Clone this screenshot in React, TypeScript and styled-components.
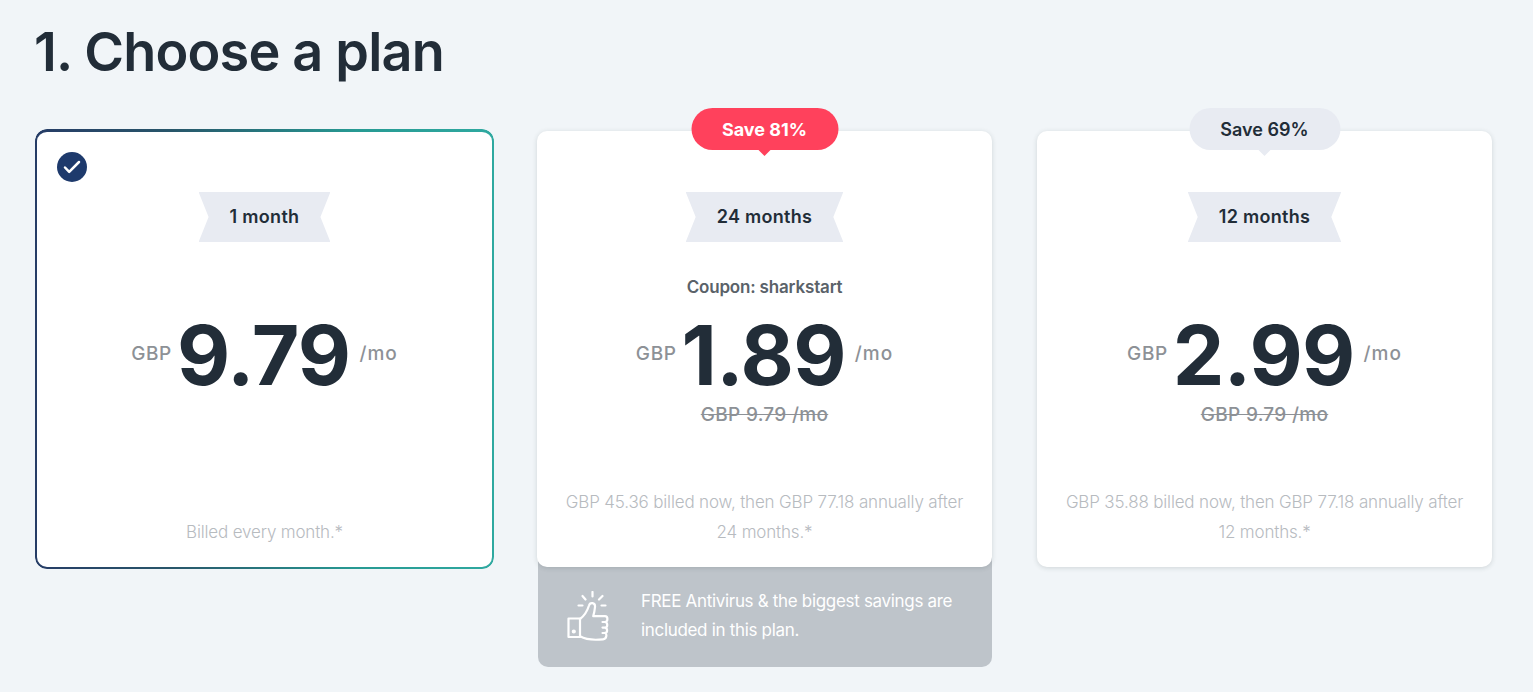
import styled, { createGlobalStyle, css } from 'styled-components'

type Plan = {
  period: string
  price: string
  billing: string
  save?: string
  highlighted?: boolean
  selected?: boolean
  coupon?: string
  oldPrice?: string
  perk?: string
}

const plans: Plan[] = [
  {
    period: '1 month',
    price: '9.79',
    billing: 'Billed every month.*',
    selected: true
  },
  {
    period: '24 months',
    price: '1.89',
    billing: 'GBP 45.36 billed now, then GBP 77.18 annually after 24 months.*',
    save: 'Save 81%',
    highlighted: true,
    coupon: 'Coupon: sharkstart',
    oldPrice: 'GBP 9.79 /mo',
    perk: 'FREE Antivirus & the biggest savings are included in this plan.'
  },
  {
    period: '12 months',
    price: '2.99',
    billing: 'GBP 35.88 billed now, then GBP 77.18 annually after 12 months.*',
    save: 'Save 69%',
    oldPrice: 'GBP 9.79 /mo'
  }
]

const ThumbIcon = () => (
  <ThumbSvg viewBox='0 0 42 50'>
    <path d='M1.5 27.5h11.5v18.5H1.5z' />
    <path d='M13 28c4-3 7-7 9-13.500c.8-3.500 6.500-3.500 6 1.500c-.3 3.500-1 6.500-1.800 9.200h11.800c3.200 0 3.200 5.300 0 5.800h-2.500M38 31c3 .6 3 5.200 0 5.600h-2.500M38 36.600c2.800.6 2.800 5 0 5.400h-2.500M38 42c2 .6 2 6-2 6.300c-8 .9-17 .4-23-3' />
    <path d='M25.500 1v4.500M15.500 5l3 3.500M35.500 5l-3.500 3.500M11.500 14.500h4M34.500 14.500h4' />
    <circle cx='6.800' cy='40.500' r='1' />
  </ThumbSvg>
)

const PlanColumn = ({ plan }: { plan: Plan }) => (
  <Column>
    <Card $selected={plan.selected}>
      {plan.selected && (
        <Check>
          <svg width='18' height='14' viewBox='0 0 18 14'>
            <path d='M2 7.500l4.200 4.300L16 2' />
          </svg>
        </Check>
      )}
      {plan.save && <Badge $highlighted={plan.highlighted}>{plan.save}</Badge>}
      <Ribbon>{plan.period}</Ribbon>
      <Coupon>{plan.coupon}</Coupon>
      <PriceRow>
        <Unit>GBP</Unit>
        <Price>{plan.price}</Price>
        <Unit $wide>/mo</Unit>
      </PriceRow>
      <OldPrice>{plan.oldPrice}</OldPrice>
      <Billing>{plan.billing}</Billing>
    </Card>
    {plan.perk && (
      <Perk>
        <ThumbIcon />
        <PerkText>{plan.perk}</PerkText>
      </Perk>
    )}
  </Column>
)

export default function App() {
  return (
    <>
      <GlobalStyle />
      <Page>
        <Title>1. Choose a plan</Title>
        <Plans>
          {plans.map((plan) => (
            <PlanColumn key={plan.period} plan={plan} />
          ))}
        </Plans>
      </Page>
    </>
  )
}

const GlobalStyle = createGlobalStyle`
  * {
    box-sizing: border-box;
  }

  body {
    margin: 0;
    background: #f1f5f8;
    font-family: Inter, 'Liberation Sans', sans-serif;
    color: #222d38;
  }
`

const Page = styled.main`
  width: 1533px;
  height: 692px;
  padding: 17px 0 0 37px;
  overflow: hidden;
`

const Title = styled.h1`
  margin: 0 0 44px -3px;
  font-size: 54px;
  line-height: 70px;
  font-weight: 600;
  letter-spacing: -0.8px;
  white-space: nowrap;
`

const Plans = styled.div`
  display: grid;
  grid-template-columns: repeat(3, 455px);
  column-gap: 45px;
  align-items: start;
`

const Column = styled.section`
  display: flex;
  flex-direction: column;
`

const Card = styled.div<{ $selected?: boolean }>`
  position: relative;
  z-index: 1;
  display: flex;
  flex-direction: column;
  align-items: center;
  height: 436px;
  padding: 61px 20px 20px;
  border-radius: 10px;
  background: #fff;
  box-shadow: 0 1px 5px rgba(30, 50, 50, 0.16);

  ${({ $selected }) =>
    $selected &&
    css`
      box-shadow: none;

      &::before {
        content: '';
        position: absolute;
        inset: -2px;
        padding: 3px 2px 2px;
        border-radius: 12px;
        background: linear-gradient(90deg, #263c66 0%, #28566a 30%, #279a93 70%, #2fa9a0 100%);
        mask: linear-gradient(#000 0 0) content-box exclude, linear-gradient(#000 0 0);
      }
    `}
`

const Check = styled.span`
  position: absolute;
  top: 21px;
  left: 20px;
  display: flex;
  align-items: center;
  justify-content: center;
  width: 30px;
  height: 30px;
  border-radius: 50%;
  background: #1e3a6c;

  path {
    fill: none;
    stroke: #fff;
    stroke-width: 2.5;
    stroke-linecap: round;
    stroke-linejoin: round;
  }
`

const Badge = styled.span<{ $highlighted?: boolean }>`
  position: absolute;
  top: -23px;
  left: 50%;
  width: ${({ $highlighted }) => ($highlighted ? 147 : 151)}px;
  height: 42px;
  border-radius: 21px;
  transform: translateX(-50%);
  background: ${({ $highlighted }) => ($highlighted ? '#ff415c' : '#e8ebf2')};
  color: ${({ $highlighted }) => ($highlighted ? '#fff' : '#222d38')};
  font-size: 18px;
  font-weight: ${({ $highlighted }) => ($highlighted ? 700 : 600)};
  line-height: 43px;
  text-align: center;

  &::after {
    content: '';
    position: absolute;
    top: 100%;
    left: 50%;
    margin-left: -6px;
    border: 6px solid transparent;
    border-bottom: 0;
    border-top-color: ${({ $highlighted }) => ($highlighted ? '#ff415c' : '#e8ebf2')};
  }
`

const Ribbon = styled.div`
  height: 50px;
  padding: 0 31px;
  background: #e8ebf2;
  clip-path: polygon(0 0, 100% 0, calc(100% - 10px) 50%, 100% 100%, 0 100%, 10px 50%);
  font-size: 18px;
  font-weight: 600;
  line-height: 49px;
  letter-spacing: 0.3px;
`

const Coupon = styled.div`
  height: 30px;
  margin-top: 30px;
  color: #5a6269;
  font-size: 17px;
  font-weight: 600;
  line-height: 30px;
  letter-spacing: -0.17px;
`

const PriceRow = styled.div`
  display: flex;
  height: 87px;
  margin-top: 10px;
`

const Unit = styled.span<{ $wide?: boolean }>`
  color: #8d9196;
  font-size: 19px;
  font-weight: 550;
  line-height: 84px;
  letter-spacing: ${({ $wide }) => ($wide ? 1 : 0.6)}px;
`

const Price = styled.strong`
  margin: 0 9px 0 5px;
  font-size: 82px;
  font-weight: 700;
  line-height: 88px;
  letter-spacing: -0.7px;
`

const OldPrice = styled.div`
  height: 30px;
  color: #8d9196;
  font-size: 19px;
  font-weight: 500;
  line-height: 31px;
  letter-spacing: 0.3px;
  text-decoration: line-through;
`

const Billing = styled.p`
  width: 408px;
  margin: auto 0 0;
  color: #b7bbbf;
  font-size: 17px;
  font-weight: 300;
  line-height: 30px;
  letter-spacing: -0.17px;
  text-align: center;
`

const Perk = styled.div`
  display: flex;
  align-items: center;
  width: 454px;
  height: 110px;
  margin: -10px 0 0 1px;
  padding: 8px 0 0 29px;
  border-radius: 0 0 10px 10px;
  background: #bec4ca;
`

const ThumbSvg = styled.svg`
  flex: none;
  width: 42px;
  height: 50px;
  margin-right: 32px;
  fill: none;
  stroke: #fff;
  stroke-width: 2.2;
  stroke-linecap: round;
  stroke-linejoin: round;
`

const PerkText = styled.p`
  width: 330px;
  margin: 0;
  color: #fff;
  font-size: 17px;
  line-height: 29px;
  letter-spacing: -0.32px;
`
